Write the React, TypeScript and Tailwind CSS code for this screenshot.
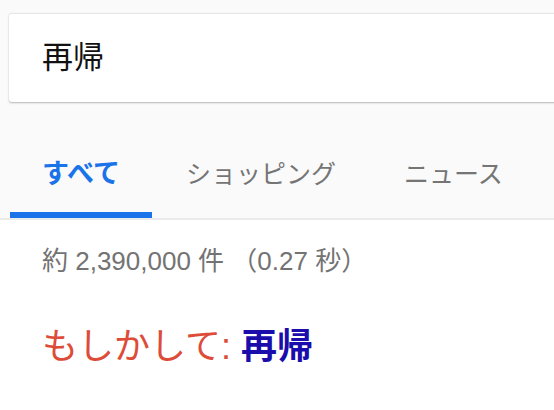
import React from "react";

const FONT = {
  fontFamily: '"Liberation Sans", "Noto Sans CJK JP", sans-serif',
};

export default function App() {
  return (
    <div
      className="w-[554px] h-[410px] overflow-hidden bg-white"
      style={FONT}
    >
      <div className="bg-[#fafafa] pt-[13px] pl-[10px]">
        <div className="-ml-[1px] w-[560px] h-[89px] bg-white rounded-[3px] border-t border-[#e6e6e6] shadow-[0_1px_2px_rgba(0,0,0,0.28)] flex items-center pl-[33px]">
          <span className="text-[31px] leading-[36px] text-[#111]">再帰</span>
        </div>
        <div className="flex mt-[57px]">
          <div className="w-[142px] flex flex-col items-center">
            <span className="text-[27px] leading-[30px] font-bold text-[#1a73e8]">
              すべて
            </span>
            <div className="h-[23px]" />
            <div className="h-[6px] w-full bg-[#1a73e8]" />
          </div>
          <div className="flex flex-col items-center">
            <span className="px-[34px] text-[25px] leading-[30px] text-[#757575]">
              ショッピング
            </span>
          </div>
          <div className="flex flex-col items-center">
            <span className="px-[34px] text-[25px] leading-[30px] text-[#757575]">
              ニュース
            </span>
          </div>
        </div>
      </div>
      <div className="h-[2px] bg-[#ebebeb]" />
      <div className="pl-[42px] pt-[26px]">
        <div className="text-[26px] leading-[30px] text-[#737373]">
          約 2,390,000 件 （0.27 秒）
        </div>
        <div className="mt-[50px] text-[36px] leading-[42px]">
          <span className="text-[#dd4b39]">もしかして: </span>
          <span className="text-[#1a0dab] font-bold">再帰</span>
        </div>
      </div>
    </div>
  );
}
